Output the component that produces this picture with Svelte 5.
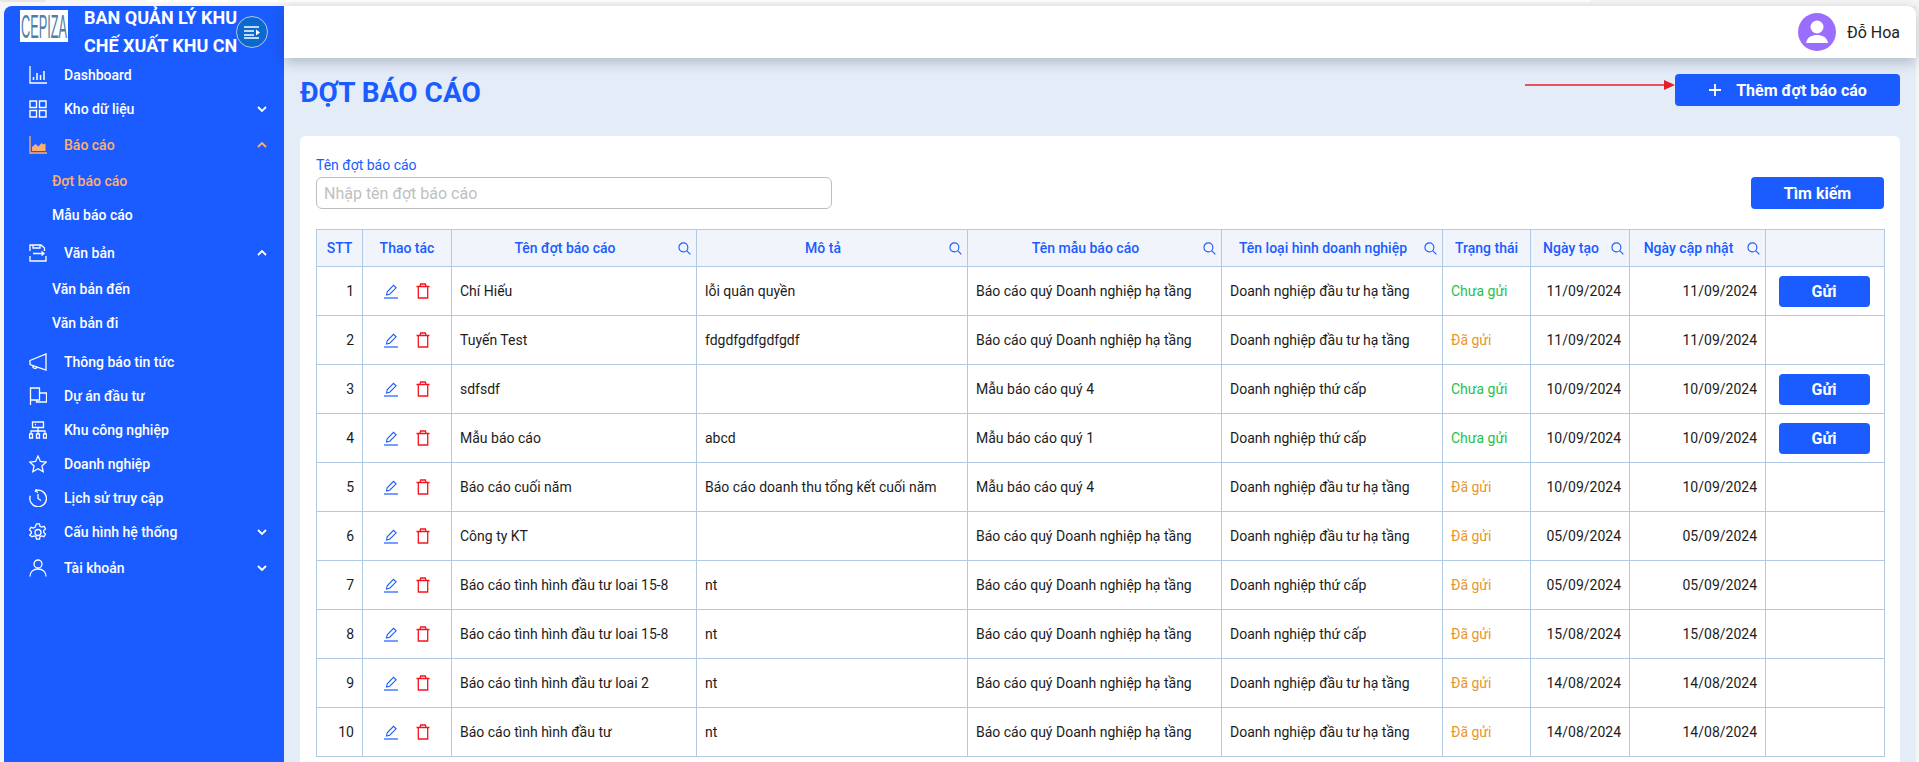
<script>
const menu = [
  { label: 'Dashboard', icon: 'dash' },
  { label: 'Kho dữ liệu', icon: 'grid', chevron: 'down' },
  { label: 'Báo cáo', icon: 'chart', chevron: 'up', active: true, tall: true,
    sub: [{ label: 'Đợt báo cáo', active: true }, { label: 'Mẫu báo cáo' }] },
  { label: 'Văn bản', icon: 'doc', chevron: 'up', tall: true, wide: true,
    sub: [{ label: 'Văn bản đến' }, { label: 'Văn bản đi' }] },
  { label: 'Thông báo tin tức', icon: 'mega' },
  { label: 'Dự án đầu tư', icon: 'flag' },
  { label: 'Khu công nghiệp', icon: 'tree' },
  { label: 'Doanh nghiệp', icon: 'star' },
  { label: 'Lịch sử truy cập', icon: 'clock' },
  { label: 'Cấu hình hệ thống', icon: 'gear', chevron: 'down' },
  { label: 'Tài khoản', icon: 'user', chevron: 'down', tall: true }
];

const columns = [
  { label: 'STT', width: 46 },
  { label: 'Thao tác', width: 89 },
  { label: 'Tên đợt báo cáo', width: 245, search: true },
  { label: 'Mô tả', width: 271, search: true },
  { label: 'Tên mẫu báo cáo', width: 254, search: true },
  { label: 'Tên loại hình doanh nghiệp', width: 221, search: true },
  { label: 'Trạng thái', width: 88 },
  { label: 'Ngày tạo', width: 99, search: true },
  { label: 'Ngày cập nhật', width: 136, search: true },
  { label: '', width: 119 }
];

const Q = 'Báo cáo quý Doanh nghiệp hạ tầng';
const HT = 'Doanh nghiệp đầu tư hạ tầng';
const TC = 'Doanh nghiệp thứ cấp';

const rows = [
  { name: 'Chí Hiếu', desc: 'lỗi quân quyền', tpl: Q, type: HT, sent: false, date: '11/09/2024' },
  { name: 'Tuyến Test', desc: 'fdgdfgdfgdfgdf', tpl: Q, type: HT, sent: true, date: '11/09/2024' },
  { name: 'sdfsdf', desc: '', tpl: 'Mẫu báo cáo quý 4', type: TC, sent: false, date: '10/09/2024' },
  { name: 'Mẫu báo cáo', desc: 'abcd', tpl: 'Mẫu báo cáo quý 1', type: TC, sent: false, date: '10/09/2024' },
  { name: 'Báo cáo cuối năm', desc: 'Báo cáo doanh thu tổng kết cuối năm', tpl: 'Mẫu báo cáo quý 4', type: HT, sent: true, date: '10/09/2024' },
  { name: 'Công ty KT', desc: '', tpl: Q, type: HT, sent: true, date: '05/09/2024' },
  { name: 'Báo cáo tình hình đầu tư loai 15-8', desc: 'nt', tpl: Q, type: TC, sent: true, date: '05/09/2024' },
  { name: 'Báo cáo tình hình đầu tư loai 15-8', desc: 'nt', tpl: Q, type: TC, sent: true, date: '15/08/2024' },
  { name: 'Báo cáo tình hình đầu tư loai 2', desc: 'nt', tpl: Q, type: HT, sent: true, date: '14/08/2024' },
  { name: 'Báo cáo tình hình đầu tư', desc: 'nt', tpl: Q, type: HT, sent: true, date: '14/08/2024' }
];
</script>

<div class="page">
  <div class="strip">
    <span class="tab-grey"></span>
    <span class="tab-white"></span>
  </div>
  <div class="frame">
    <aside class="side">
      <div class="brand">
        <div class="logo">
          <svg viewBox="0 0 48 32" width="48" height="32">
            <text transform="translate(1 28) scale(.375 1)" font-family="Liberation Sans, sans-serif" font-size="34" fill="#4f7ea5">CEPIZA</text>
          </svg>
        </div>
        <div class="brand-name">BAN QUẢN LÝ KHU CHẾ XUẤT KHU CN</div>
        <button class="toggle" aria-label="menu">
          <svg viewBox="0 0 18 14" width="18" height="14" fill="none" stroke="#fff" stroke-width="1.3">
            <path d="M1 2h15M1 6h10M1 10h10M1 13h15" />
            <path d="M13 4.5l4 3-4 3z" fill="#fff" stroke="none" />
          </svg>
        </button>
      </div>
      <nav>
        {#each menu as item}
          <div class="item" class:active={item.active} class:tall={item.tall}>
            <svg class="ico" viewBox="0 0 18 18" width="18" height="18" fill="none" stroke="currentColor" stroke-width="1.3">
              {#if item.icon === 'dash'}
                <path d="M1 0v17h17" />
                <path d="M4.500 14v-3M8 14V7M11.500 14V9M15 14V5" stroke-width="1.500" />
              {:else if item.icon === 'grid'}
                <path d="M1 1h6.500v6.500H1zM10.500 1H17v6.500h-6.500zM1 10.500h6.500V17H1zM10.500 10.500H17V17h-6.500z" stroke-width="1.400" />
              {:else if item.icon === 'chart'}
                <path d="M1 0v17h17" />
                <path d="M3 15v-4l3.500-3 3 2.500 3-3.500 2 1.500 2-1V15z" fill="currentColor" stroke="none" />
              {:else if item.icon === 'doc'}
                <path d="M1 7V1h11l3.500 3v3M1 12v5h16v-5M4 1v3h7V1" />
                <path d="M4 9.500h11M12.500 7.500l2.500 2-2.500 2" />
              {:else if item.icon === 'mega'}
                <path d="M1 7.500L17 1v16L1 11.500zM4 12.500a2 2 0 0 0 4 1.500" />
              {:else if item.icon === 'flag'}
                <path d="M1.500 18V1h9v12H1.500M10.500 6h7v9h-10v-2" />
              {:else if item.icon === 'tree'}
                <path d="M3.500 1h11v5.500h-11zM9 6.500V10M2 13v-3h14v3M9 10v3M.5 13h3v4h-3zM7.500 13h3v4h-3zM14.500 13h3v4h-3z" />
                <path d="M6 3.500h1" />
              {:else if item.icon === 'star'}
                <path d="M9 1l2.400 5.400 5.900.6-4.400 3.900 1.300 5.800L9 13.700l-5.200 3 1.300-5.800L.7 7l5.900-.6z" />
              {:else if item.icon === 'clock'}
                <path d="M4 3a8.300 8.300 0 1 1-3 6.500M4.500 .5l-.3 3 3 .3" transform="rotate(20 9 9)" />
                <path d="M9 5v4.500l3 2" />
              {:else if item.icon === 'gear'}
                <path d="M7.500 .8h3l.5 2.400 1.700.9 2.300-.8 1.500 2.600-1.800 1.600v2l1.800 1.600-1.500 2.600-2.300-.8-1.700.9-.5 2.400h-3l-.5-2.400-1.700-.9-2.300.8L.5 12.100l1.800-1.600v-2L.5 6.900 2 4.300l2.300.8L6 4.200z" />
                <circle cx="9" cy="9.500" r="3" />
              {:else if item.icon === 'user'}
                <circle cx="9" cy="5" r="4" />
                <path d="M1 17.500c0-5 3.500-7.500 8-7.500s8 2.500 8 7.500" />
              {/if}
            </svg>
            <span class="label">{item.label}</span>
            {#if item.chevron}
              <svg class="chev" viewBox="0 0 10 6" width="10" height="6" fill="none" stroke="currentColor" stroke-width="1.800">
                <path d={item.chevron === 'down' ? 'M1 1l4 4 4-4' : 'M1 5l4-4 4 4'} />
              </svg>
            {/if}
          </div>
          {#if item.sub}
            <div class="subs" class:wide={item.wide}>
              {#each item.sub as s}
                <div class="sub" class:active={s.active}>{s.label}</div>
              {/each}
            </div>
          {/if}
        {/each}
      </nav>
    </aside>

    <div class="right">
      <header class="head">
        <span class="avatar">
          <svg viewBox="0 0 38 38" width="38" height="38">
            <circle cx="19" cy="14" r="6.500" fill="#fff" />
            <path d="M8 30c1-6 6-8 11-8s10 2 11 8z" fill="#fff" />
          </svg>
        </span>
        <span class="user-name">Đỗ Hoa</span>
      </header>

      <main class="content">
        <div class="title-row">
          <h1>ĐỢT BÁO CÁO</h1>
          <div class="add-wrap">
            <svg class="arrow" viewBox="0 0 150 10" width="150" height="10">
              <path d="M0 5h140" stroke="#e5202a" stroke-width="1.500" />
              <path d="M139 0l11 5-11 5z" fill="#e5202a" />
            </svg>
            <button class="btn add">
              <svg viewBox="0 0 14 14" width="14" height="14" stroke="#fff" stroke-width="1.800"><path d="M7 1v12M1 7h12" /></svg>
              Thêm đợt báo cáo
            </button>
          </div>
        </div>

        <section class="card">
          <div class="filter">
            <div class="field">
              <label for="ten-dot">Tên đợt báo cáo</label>
              <input id="ten-dot" placeholder="Nhập tên đợt báo cáo" />
            </div>
            <button class="btn find">Tìm kiếm</button>
          </div>

          <table>
            <colgroup>
              {#each columns as c}
                <col style="width: {c.width}px" />
              {/each}
            </colgroup>
            <thead>
              <tr>
                {#each columns as c}
                  <th>
                    <div class="th-in" class:searchable={c.search}>
                      <span class="th-label">{c.label}</span>
                      {#if c.search}
                        <svg viewBox="0 0 14 14" width="13" height="13" fill="none" stroke="#1a5cff" stroke-width="1.200">
                          <circle cx="5.800" cy="5.800" r="4.800" />
                          <path d="M9.300 9.300l4 4" />
                        </svg>
                      {/if}
                    </div>
                  </th>
                {/each}
              </tr>
            </thead>
            <tbody>
              {#each rows as r, i}
                <tr>
                  <td class="num">{i + 1}</td>
                  <td>
                    <div class="acts">
                      <svg viewBox="0 0 16 16" width="16" height="16" fill="none" stroke="#1a5cff" stroke-width="1.100">
                        <path d="M3.500 12l.7-3.200L10.500 2.300l2.600 2.500-6.400 6.400z" />
                        <path d="M1 15h14" stroke-width="1.200" />
                      </svg>
                      <svg viewBox="0 0 16 16" width="16" height="16" fill="none" stroke="#f5141e" stroke-width="1.300">
                        <path d="M1.500 3.500h13M3.300 3.500V15h9.400V3.500M5 3.500l.6-2.500h4.800l.6 2.500" />
                      </svg>
                    </div>
                  </td>
                  <td>{r.name}</td>
                  <td>{r.desc}</td>
                  <td>{r.tpl}</td>
                  <td>{r.type}</td>
                  <td class={r.sent ? 'sent' : 'unsent'}>{r.sent ? 'Đã gửi' : 'Chưa gửi'}</td>
                  <td class="num">{r.date}</td>
                  <td class="num">{r.date}</td>
                  <td class="send">
                    {#if !r.sent}
                      <button class="btn gui">Gửi</button>
                    {/if}
                  </td>
                </tr>
              {/each}
            </tbody>
          </table>
        </section>
      </main>
    </div>
  </div>
</div>

<style>
:global(body) {
  margin: 0;
  font-family: Roboto, "Noto Sans", sans-serif;
  background: #f6f6f6;
}

.page {
  height: 762px;
  display: flex;
  flex-direction: column;
  overflow: hidden;
}

.strip {
  height: 6px;
  display: flex;
  gap: 100px;
  align-items: flex-start;
}

.tab-grey {
  width: 46px;
  height: 2px;
  background: #e6e6e6;
  border-radius: 0 0 4px 4px;
}

.tab-white {
  width: 1445px;
  height: 2px;
  background: #fff;
  border-radius: 0 0 6px 6px;
}

.frame {
  flex: 1;
  min-height: 0;
  display: flex;
  margin: 0 3px 0 4px;
}

.side {
  width: 280px;
  flex: none;
  background: #1a5cff;
  color: #fff;
  border-radius: 8px 0 0 0;
}

.brand {
  height: 52px;
  position: relative;
  display: flex;
  align-items: center;
  padding-left: 16px;
  gap: 16px;
}

.logo {
  width: 48px;
  height: 32px;
  background: #fff;
  margin-top: -12px;
  flex: none;
}

.logo svg {
  display: block;
}

.brand-name {
  width: 168px;
  font-size: 18px;
  font-weight: 700;
  line-height: 28px;
  color: #fff;
  margin-top: -1px;
}

.toggle {
  position: absolute;
  left: 232px;
  top: 10px;
  width: 32px;
  height: 32px;
  padding: 0;
  display: flex;
  align-items: center;
  justify-content: center;
  border-radius: 50%;
  border: 1px solid #b5c8e0;
  background: #0b69cf;
}

.item {
  height: 34px;
  display: flex;
  align-items: center;
  padding-left: 25px;
  font-size: 14px;
  font-weight: 500;
}

.item.tall {
  height: 38px;
}

.item.active,
.sub.active {
  color: #ffae6e;
}

.ico {
  flex: none;
}

.label {
  margin-left: 17px;
  flex: 1;
}

.chev {
  margin-right: 17px;
}

.subs {
  margin-bottom: 2px;
}

.subs.wide {
  margin-bottom: 5px;
}

.sub {
  height: 34px;
  line-height: 34px;
  padding-left: 48px;
  font-size: 14px;
  font-weight: 500;
}

.right {
  flex: 1;
  min-width: 0;
  display: flex;
  flex-direction: column;
  background: #e3ecf7;
}

.head {
  height: 52px;
  flex: none;
  background: #fff;
  border-radius: 0 8px 0 0;
  box-shadow: 0 4px 14px rgba(40, 50, 70, 0.28);
  display: flex;
  align-items: center;
  justify-content: flex-end;
  gap: 11px;
  padding-right: 16px;
  position: relative;
}

.avatar {
  width: 38px;
  height: 38px;
  border-radius: 50%;
  background: #9b6dff;
  overflow: hidden;
  display: block;
}

.user-name {
  font-size: 16px;
  color: #222;
}

.content {
  flex: 1;
  min-height: 0;
  padding: 16px 16px 0;
}

.title-row {
  height: 32px;
  display: flex;
  justify-content: space-between;
  align-items: center;
  margin-bottom: 30px;
}

h1 {
  margin: 4px 0 0;
  font-size: 28px;
  font-weight: 700;
  color: #1a5cff;
}

.add-wrap {
  display: flex;
  align-items: center;
}

.arrow {
  margin-top: -10px;
}

.btn {
  border: 0;
  background: #1a5cff;
  color: #fff;
  font-family: inherit;
  font-weight: 700;
  font-size: 16px;
  border-radius: 4px;
  padding: 0;
}

.add {
  width: 225px;
  height: 32px;
  display: flex;
  align-items: center;
  justify-content: center;
  gap: 14px;
}

.card {
  background: #fff;
  border-radius: 6px 6px 0 0;
  padding: 19px 16px 16px;
}

.filter {
  display: flex;
  justify-content: space-between;
  align-items: flex-end;
  margin-bottom: 20px;
}

.field label {
  display: block;
  color: #1a5cff;
  font-size: 14px;
  line-height: 20px;
  margin-bottom: 2px;
}

.field input {
  width: 516px;
  height: 32px;
  box-sizing: border-box;
  border: 1px solid #bdbdbd;
  border-radius: 6px;
  padding: 0 7px;
  font-family: inherit;
  font-size: 16px;
  outline: none;
}

.field input::placeholder {
  color: #bfbfbf;
}

.find {
  width: 133px;
  height: 32px;
}

table {
  width: 1568px;
  table-layout: fixed;
  border-collapse: collapse;
  font-size: 14px;
}

th,
td {
  border: 1px solid #b1c9e2;
  padding: 0 8px;
  color: #1c1c1c;
  font-weight: 400;
  white-space: nowrap;
}

th {
  height: 36px;
  padding: 0;
  background: #f1f5fb;
  color: #1a5cff;
  font-weight: 500;
}

.th-in {
  display: flex;
  align-items: center;
}

.th-in.searchable {
  padding-right: 5px;
}

.th-label {
  flex: 1;
  text-align: center;
}

td {
  height: 48px;
}

.num {
  text-align: right;
}

.acts {
  display: flex;
  justify-content: center;
  gap: 16px;
}

.sent {
  color: #e8962e;
}

.unsent {
  color: #1fc24a;
}

td.send {
  text-align: center;
  padding: 0 10px 0 8px;
}

.gui {
  width: 91px;
  height: 31px;
}
</style>
